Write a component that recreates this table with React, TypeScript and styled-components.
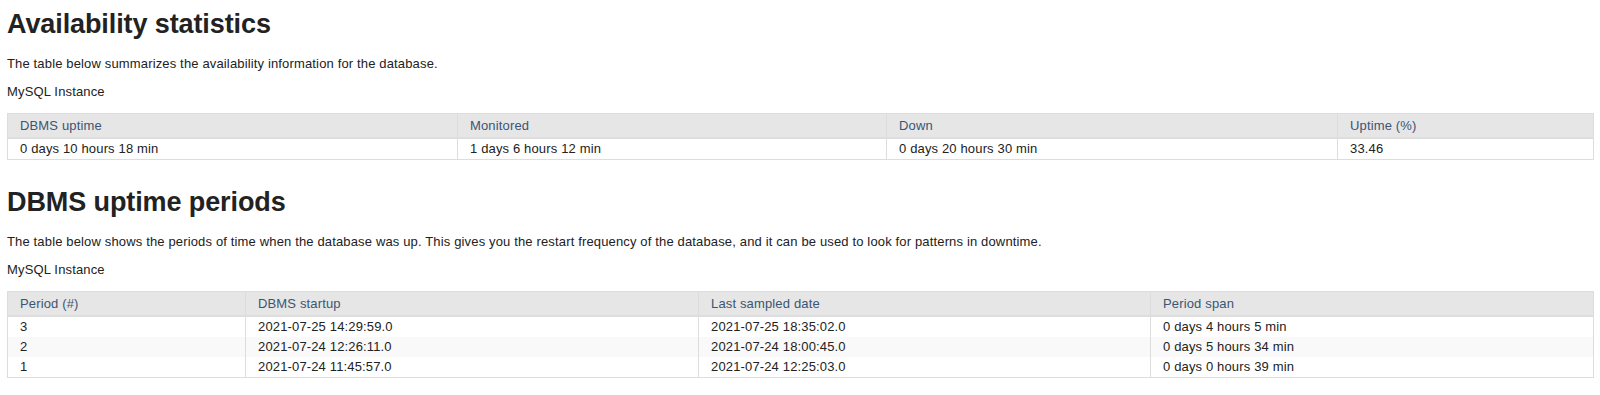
import * as React from 'react';
import styled, { createGlobalStyle } from 'styled-components';

const GlobalStyle = createGlobalStyle`
  body {
    margin: 0;
    padding: 0 7px;
    background: #fff;
    color: #333;
    font-family: "Liberation Sans", Arial, sans-serif;
    font-size: 13px;
  }
`;

type Column = { title: string; width: number };

const availabilityColumns: Column[] = [
  { title: 'DBMS uptime', width: 450 },
  { title: 'Monitored', width: 429 },
  { title: 'Down', width: 451 },
  { title: 'Uptime (%)', width: 256 },
];

const availabilityRows = [
  ['0 days 10 hours 18 min', '1 days 6 hours 12 min', '0 days 20 hours 30 min', '33.46'],
];

const periodColumns: Column[] = [
  { title: 'Period (#)', width: 238 },
  { title: 'DBMS startup', width: 453 },
  { title: 'Last sampled date', width: 452 },
  { title: 'Period span', width: 443 },
];

const periodRows = [
  ['3', '2021-07-25 14:29:59.0', '2021-07-25 18:35:02.0', '0 days 4 hours 5 min'],
  ['2', '2021-07-24 12:26:11.0', '2021-07-24 18:00:45.0', '0 days 5 hours 34 min'],
  ['1', '2021-07-24 11:45:57.0', '2021-07-24 12:25:03.0', '0 days 0 hours 39 min'],
];

const StatsTable = ({ columns, rows }: { columns: Column[]; rows: string[][] }) => (
  <Table>
    <colgroup>
      {columns.map((c) => (
        <col key={c.title} style={{ width: c.width }} />
      ))}
    </colgroup>
    <thead>
      <tr>
        {columns.map((c) => (
          <HeadCell key={c.title}>{c.title}</HeadCell>
        ))}
      </tr>
    </thead>
    <tbody>
      {rows.map((row, i) => (
        <Row key={i} $striped={i % 2 === 1}>
          {row.map((v, j) => (
            <Cell key={j}>{v}</Cell>
          ))}
        </Row>
      ))}
    </tbody>
  </Table>
);

const App = () => (
  <Page>
    <GlobalStyle />
    <Section>
      <Heading>Availability statistics</Heading>
      <Text>The table below summarizes the availability information for the database.</Text>
      <Text>MySQL Instance</Text>
      <StatsTable columns={availabilityColumns} rows={availabilityRows} />
    </Section>
    <Section>
      <Heading>DBMS uptime periods</Heading>
      <Text>
        The table below shows the periods of time when the database was up. This gives you the
        restart frequency of the database, and it can be used to look for patterns in downtime.
      </Text>
      <Text>MySQL Instance</Text>
      <StatsTable columns={periodColumns} rows={periodRows} />
    </Section>
  </Page>
);

export default App;

const Page = styled.div`
  display: flex;
  flex-direction: column;
  padding-top: 8px;
`;

const Section = styled.section`
  display: flex;
  flex-direction: column;
  margin-bottom: 26px;
`;

const Heading = styled.h2`
  margin: 0 0 15px;
  font-size: 27px;
  line-height: 32px;
  letter-spacing: -0.1px;
  font-weight: bold;
  color: #222;
`;

const Text = styled.p`
  margin: 0 0 10px;
  font-size: 13px;
  line-height: 18px;
  letter-spacing: 0.15px;
  color: #222;

  & + table {
    margin-top: 2px;
  }
`;

const Table = styled.table`
  width: 1586px;
  table-layout: fixed;
  border-collapse: collapse;
  border: 1px solid #ddd;
  letter-spacing: 0.15px;
`;

const HeadCell = styled.th`
  padding: 3px 12px 2px;
  line-height: 18px;
  text-align: left;
  font-weight: normal;
  color: #3b5573;
  background: #e6e6e6;
  border-left: 1px solid #ddd;
  border-bottom: 2px solid #ddd;
`;

const Row = styled.tr<{ $striped: boolean }>`
  background: ${(p) => (p.$striped ? '#f9f9f9' : '#fff')};
`;

const Cell = styled.td`
  padding: 1px 12px;
  line-height: 18px;
  color: #222;
  border-left: 1px solid #ddd;
`;
